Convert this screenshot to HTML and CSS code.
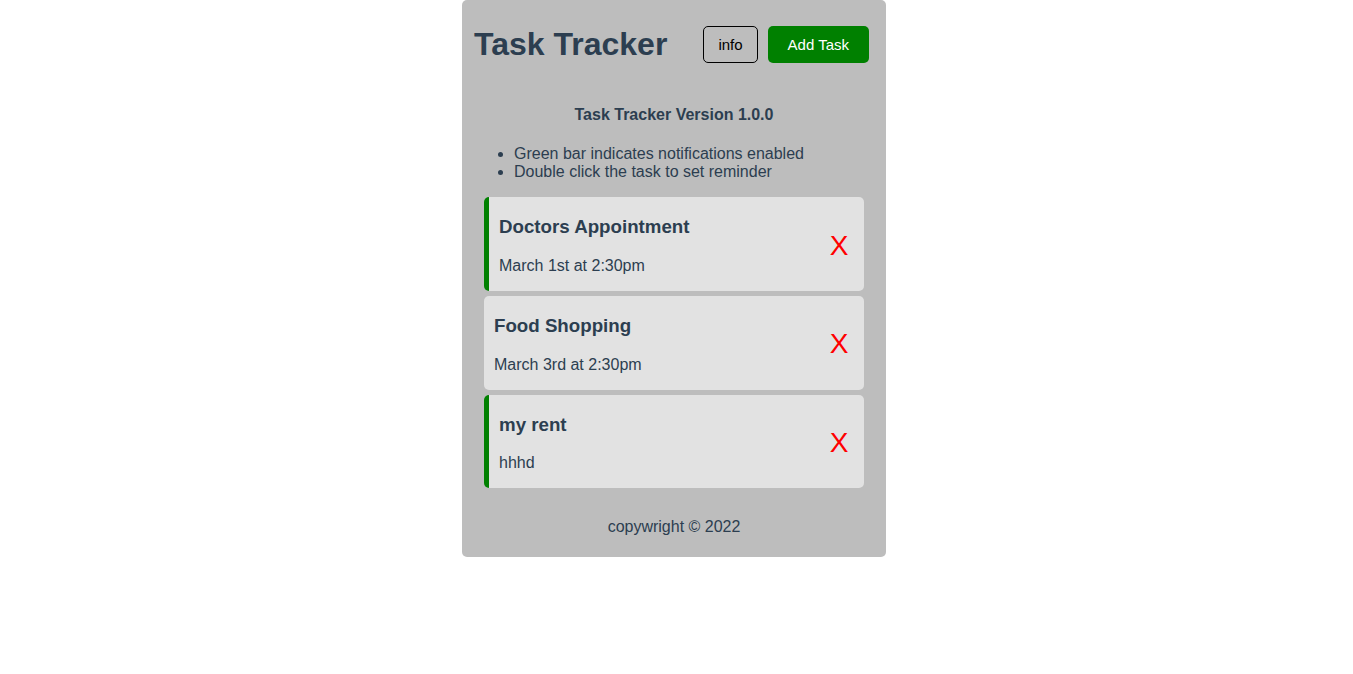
FILE: index.html
```html
<!DOCTYPE html>
<html lang="en">
<head>
<meta charset="utf-8">
<title>Task Tracker</title>
<link rel="stylesheet" href="styles.css">
</head>
<body>
<div class="page">
  <div class="container">
    <header class="header">
      <h1 class="title">Task Tracker</h1>
      <div class="actions">
        <button class="btn btn-info">info</button>
        <button class="btn btn-add">Add Task</button>
      </div>
    </header>
    <h4 class="version">Task Tracker Version 1.0.0</h4>
    <ul class="notes">
      <li>Green bar indicates notifications enabled</li>
      <li>Double click the task to set reminder</li>
    </ul>
    <div class="tasks">
      <div class="task reminder">
        <div class="task-body">
          <h3 class="task-title">Doctors Appointment</h3>
          <p class="task-day">March 1st at 2:30pm</p>
        </div>
        <span class="task-delete">X</span>
      </div>
      <div class="task">
        <div class="task-body">
          <h3 class="task-title">Food Shopping</h3>
          <p class="task-day">March 3rd at 2:30pm</p>
        </div>
        <span class="task-delete">X</span>
      </div>
      <div class="task reminder">
        <div class="task-body">
          <h3 class="task-title">my rent</h3>
          <p class="task-day">hhhd</p>
        </div>
        <span class="task-delete">X</span>
      </div>
    </div>
    <footer class="footer">
      <p>copywright &copy; 2022</p>
    </footer>
  </div>
</div>
</body>
</html>
```

FILE: styles.css
```css
* { box-sizing: border-box; }

body {
  margin: 0;
  font-family: "Liberation Sans", Arial, sans-serif;
  color: #2c3e50;
  background: #ffffff;
}

.page {
  padding-right: 5px;
}

.container {
  width: 424px;
  margin: 0 auto;
  background: #bdbdbd;
  border-radius: 5px;
  padding: 0 12px 6px;
}

.header {
  display: flex;
  align-items: center;
  justify-content: space-between;
  padding: 5px 5px 0 0;
}

.title {
  margin: 21px 0;
  font-size: 32px;
  line-height: 37px;
  font-weight: bold;
}

.actions {
  display: flex;
  gap: 10px;
}

.btn {
  height: 37px;
  font-family: "Liberation Sans", Arial, sans-serif;
  font-size: 15px;
  border-radius: 5px;
  cursor: pointer;
}

.btn-info {
  background: transparent;
  border: 1px solid #000;
  color: #000;
  padding: 0 14px;
}

.btn-add {
  background: #008000;
  border: none;
  color: #fff;
  padding: 0 20px;
}

.version {
  margin: 22px 0 21px;
  text-align: center;
  font-size: 16px;
  line-height: 18.4px;
  font-weight: bold;
}

.notes {
  margin: 0 0 16px;
  padding-left: 40px;
  font-size: 16px;
  line-height: 18px;
}

.tasks {
  display: flex;
  flex-direction: column;
  gap: 5px;
  margin: 0 10px;
}

.task {
  display: flex;
  align-items: center;
  justify-content: space-between;
  background: #e2e2e2;
  border-radius: 5px;
  padding: 19px 15.5px 15.7px 10px;
}

.task.reminder {
  border-left: 5px solid #008000;
}

.task-title {
  margin: 0 0 19px;
  font-size: 18.72px;
  line-height: 21.5px;
  font-weight: bold;
}

.task-day {
  margin: 0;
  font-size: 16px;
  line-height: 18.4px;
}

.task-delete {
  color: #ff0000;
  font-size: 28px;
  line-height: 32px;
}

.footer {
  text-align: center;
}

.footer p {
  margin: 30px 0 14px;
  font-size: 16px;
  line-height: 18.4px;
}
```
